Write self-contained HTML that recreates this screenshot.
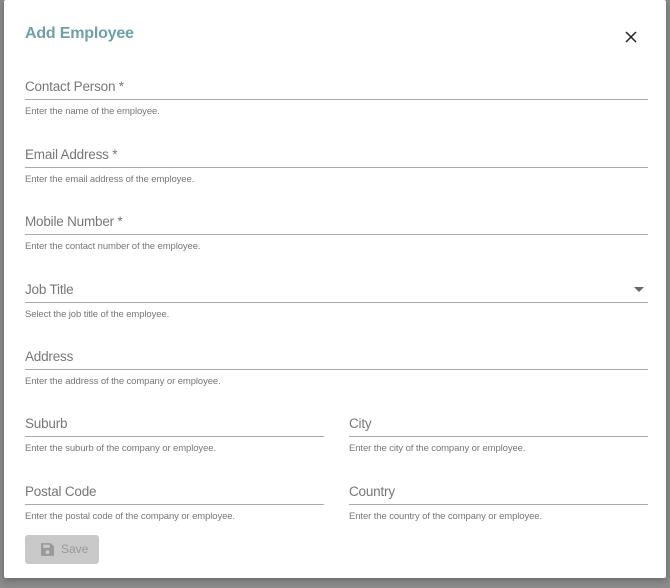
<!DOCTYPE html>
<html><head><meta charset="utf-8"><style>
body{margin:0;width:670px;height:588px;background:#8c8c8c;position:relative;overflow:hidden;font-family:"Liberation Sans",sans-serif}
.dlg{position:absolute;left:4px;top:0;width:662px;height:578px;background:#fff;border-radius:2px;box-shadow:0 2px 8px rgba(0,0,0,.3)}
.t{position:absolute;left:21px;top:25px;font-size:16px;font-weight:bold;color:#6f9fa8;letter-spacing:-0.2px}
.f{position:absolute;height:40px}
.f .l{position:absolute;left:0;top:-1px;font-size:13.5px;color:#777;letter-spacing:-0.2px}
.f .u{position:absolute;left:0;right:0;top:19px;border-top:1px solid #aaa}
.f .h{position:absolute;left:0;top:26px;font-size:9.5px;color:#777;letter-spacing:-0.1px}
.btn{position:absolute;left:21px;top:535px;width:74px;height:29px;background:#c9c9c9;border-radius:3px;color:#999;font-size:12px}
</style></head><body>
<div class="dlg">
<div class="t">Add Employee</div>
<svg style="position:absolute;left:621px;top:31px" width="12" height="12" viewBox="0 0 12 12"><path d="M1 1L11 11M11 1L1 11" stroke="#222" stroke-width="1.5"/></svg>
<div class="f" style="left:21px;top:80px;width:623px"><div class="l">Contact Person *</div><div class="u"></div><div class="h">Enter the name of the employee.</div></div>
<div class="f" style="left:21px;top:148px;width:623px"><div class="l">Email Address *</div><div class="u"></div><div class="h">Enter the email address of the employee.</div></div>
<div class="f" style="left:21px;top:215px;width:623px"><div class="l">Mobile Number *</div><div class="u"></div><div class="h">Enter the contact number of the employee.</div></div>
<div class="f" style="left:21px;top:283px;width:623px"><div class="l">Job Title</div><div class="u"></div><div class="h">Select the job title of the employee.</div>
<svg style="position:absolute;right:4px;top:4px" width="10" height="6"><path d="M0 0L10 0L5 5Z" fill="#666"/></svg></div>
<div class="f" style="left:21px;top:350px;width:623px"><div class="l">Address</div><div class="u"></div><div class="h">Enter the address of the company or employee.</div></div>
<div class="f" style="left:21px;top:417px;width:299px"><div class="l">Suburb</div><div class="u"></div><div class="h">Enter the suburb of the company or employee.</div></div>
<div class="f" style="left:345px;top:417px;width:299px"><div class="l">City</div><div class="u"></div><div class="h">Enter the city of the company or employee.</div></div>
<div class="f" style="left:21px;top:485px;width:299px"><div class="l">Postal Code</div><div class="u"></div><div class="h">Enter the postal code of the company or employee.</div></div>
<div class="f" style="left:345px;top:485px;width:299px"><div class="l">Country</div><div class="u"></div><div class="h">Enter the country of the company or employee.</div></div>
<div class="btn"><svg style="position:absolute;left:15px;top:7px" width="15" height="15" viewBox="0 0 14 14"><path d="M1 1H10L13 4V13H1Z" fill="#999"/><rect x="3" y="2.5" width="6" height="3" fill="#c9c9c9"/><circle cx="7" cy="9.5" r="1.8" fill="#c9c9c9"/></svg><span style="position:absolute;left:36px;top:7px">Save</span></div>
</div>
</body></html>
